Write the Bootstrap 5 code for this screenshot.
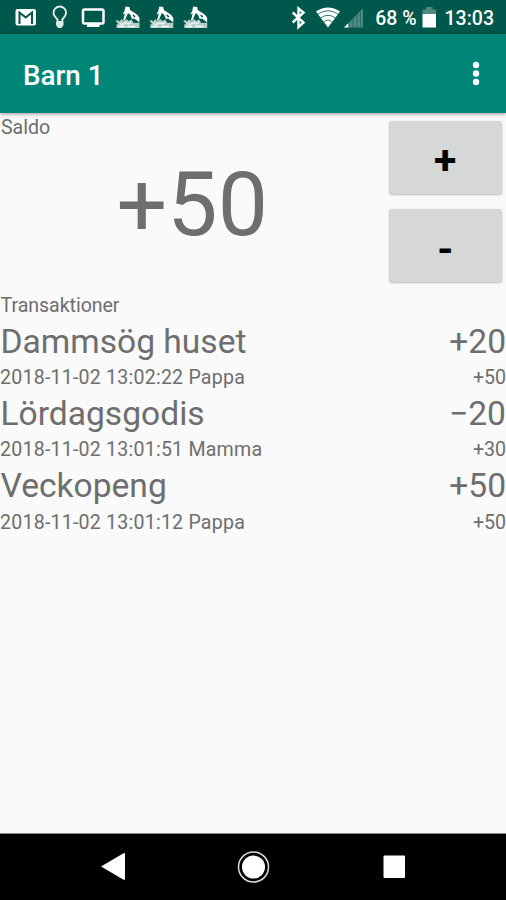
<!DOCTYPE html>
<html lang="sv">
<head>
<meta charset="utf-8">
<meta name="viewport" content="width=device-width, initial-scale=1">
<title>Barn 1</title>
<link href="https://cdn.jsdelivr.net/npm/bootstrap@5.3.0/dist/css/bootstrap.min.css" rel="stylesheet">
<style>
body{font-family:Roboto,sans-serif;background:#fafafa;color:#6e6e6e;height:900px;overflow:hidden}
.status{height:34px;background:#00574b;color:#fff;font-size:19.5px;font-weight:500;line-height:34px}
.status svg,.softkeys svg{display:block}
.status-text{padding-top:3px}
.appbar{height:79px;background:#008577;color:#fff;padding:4px 24px 0 23px;box-shadow:0 1px 4px rgba(0,0,0,.4);z-index:1}
.appbar h1{font-size:27.8px;font-weight:500;line-height:1}
.appbar svg{margin-top:-1px}
.balance{height:177.5px;padding-top:1px}
.label-s{font-size:19.6px;line-height:27px;letter-spacing:-.05px}
.stamp{letter-spacing:.21px}
.amount{font-size:89.5px;line-height:106px;padding:11px 4px 0 0}
.keys{width:117.5px;padding:7px 4px 0 0;gap:15px}
.key{height:73px;background:#d6d7d7;border-radius:3px;color:#000;font-weight:700;font-size:41px;line-height:1;box-shadow:0 1px 2px rgba(0,0,0,.25)}
.key span{display:block;padding-top:5px}
.key .minus{padding-top:7px}
.entries{padding-top:1px}
.entry{height:72.4px}
.big{font-size:33.6px;line-height:45.4px}
.inset-s{padding-left:1px}
.inset-title{padding-left:.5px}
.softkeys{height:67px;background:#000;border-top:1px solid #888}
</style>
</head>
<body class="d-flex flex-column">
<svg class="d-none"><defs>
<g id="pump" fill="#fff"><path d="M10 1.500 14 2 14.500 5 20 8.500 22 10 24 13V17L21.500 16 19 13.500 16.500 14 15 10 12.500 8 9.500 15 7.500 16 9.500 8.500 7 9.500 9 6Z"/><path d="M0 16 2 15 4 16.500 6 14 8 16.500 11 14 13 16 16 14.500 18 18 24 17.500V23H1V19.500L3 19Z" fill="#b5cec9"/><path d="M17.500 10 19.500 12M20.500 15.500 22 17.500" stroke="#00574b" stroke-width="1.500"/><path d="M4 18.500 7 19.500 10 17.500 13 19 16 17M3 21.500H9M12 21.500H20" stroke="#f4f8f7" stroke-width="1.300" fill="none"/></g>
</defs></svg>
<header class="status d-flex align-items-center flex-shrink-0">
<svg width="220" height="34" viewBox="0 0 220 34">
<rect x="15.500" y="9" width="20.500" height="16.500" rx="2" fill="#fff"/><path d="M19.500 24V12.500L25.700 17.500 32 12.500V24" fill="none" stroke="#00574b" stroke-width="2"/>
<path d="M57.500 22V19.500C55 17 53.500 15 53.500 12.800A6.300 6.300 0 0 1 66.100 12.800C66.100 15 64.500 17 62.300 19.500V22Z" fill="none" stroke="#e5eeec" stroke-width="1.900"/><path d="M56 22H63.500V25L61.500 28H58L56 25Z" fill="#dce8e5"/>
<rect x="83" y="9.500" width="20.500" height="14" rx="1.500" fill="none" stroke="#fff" stroke-width="2.500"/><path d="M87 24H99.500V27H87Z" fill="#fff"/>
<use href="#pump" x="115.500" y="5"/><use href="#pump" x="149.300" y="5"/><use href="#pump" x="183.200" y="5"/>
</svg>
<svg class="ms-auto" width="86" height="34" viewBox="280.500 0 86 34">
<path d="M292.200 12.500 303 22.500 298 27V8.500L303 12.500 292.200 22.500" fill="none" stroke="#fff" stroke-width="2.400"/>
<path d="M315.500 11.500Q327.500 3.500 339.500 11.500L327.500 27.500Z" fill="#fff"/><path d="M317.500 14Q327.500 7.500 337.500 14M320 18Q327.500 12.500 335 18M323 22Q327.500 18 332 22" fill="none" stroke="#00574b" stroke-width=".8"/>
<path d="M343.500 27.500 362.500 8.500V27.500Z" fill="#4d8980"/><path d="M343.500 27.500 348 23V27.500Z" fill="#fff"/><path d="M348.500 22V28M352.500 17V28M356.500 13V28M360 10V28" stroke="#20695e" stroke-width=".8"/>
</svg>
<span class="status-text text-nowrap ps-2">68 %</span>
<svg class="ms-1" width="16" height="34" viewBox="0 0 16 34"><path d="M1.500 14V9.500H5V7H11.500V9.500H15V14Z" fill="#4d8980"/><path d="M1.500 14H15V27.500H1.500Z" fill="#fff"/></svg>
<time class="status-text text-nowrap ms-2 me-2 pe-1">13:03</time>
</header>
<nav class="appbar d-flex align-items-center justify-content-between flex-shrink-0">
<h1 class="m-0">Barn 1</h1>
<svg width="12" height="28" viewBox="0 0 12 28" fill="#fff"><circle cx="6" cy="4" r="3.200"/><circle cx="6" cy="12.500" r="3.200"/><circle cx="6" cy="21" r="3.200"/></svg>
</nav>
<main class="flex-grow-1">
<section class="balance d-flex">
<div class="flex-grow-1"><div class="label-s inset-s">Saldo</div><div class="amount text-center">+50</div></div>
<div class="keys d-flex flex-column"><button class="key btn p-0 w-100"><span>+</span></button><button class="key btn p-0 w-100"><span class="minus">-</span></button></div>
</section>
<section class="entries">
<div class="label-s inset-title">Transaktioner</div>
<div class="entry"><div class="big d-flex justify-content-between"><span class="inset-title">Dammsög huset</span><span>+20</span></div><div class="label-s d-flex justify-content-between"><span class="stamp">2018-11-02 13:02:22 Pappa</span><span>+50</span></div></div>
<div class="entry"><div class="big d-flex justify-content-between"><span class="inset-title">Lördagsgodis</span><span>−20</span></div><div class="label-s d-flex justify-content-between"><span class="stamp">2018-11-02 13:01:51 Mamma</span><span>+30</span></div></div>
<div class="entry"><div class="big d-flex justify-content-between"><span class="inset-title">Veckopeng</span><span>+50</span></div><div class="label-s d-flex justify-content-between"><span class="stamp">2018-11-02 13:01:12 Pappa</span><span>+50</span></div></div>
</section>
</main>
<footer class="softkeys flex-shrink-0">
<svg width="506" height="66" viewBox="0 834 506 66" fill="#fff"><path d="M101 866.500 124 853Q125 853 125 854V879Q125 880 124 880Z"/><circle cx="253.500" cy="867" r="11.500"/><circle cx="253.500" cy="867" r="15" fill="none" stroke="#ddd" stroke-width="1.500"/><rect x="383.500" y="855.500" width="21.500" height="22.500" rx="1"/></svg>
</footer>
<script src="https://cdn.jsdelivr.net/npm/bootstrap@5.3.0/dist/js/bootstrap.bundle.min.js"></script>
</body>
</html>
